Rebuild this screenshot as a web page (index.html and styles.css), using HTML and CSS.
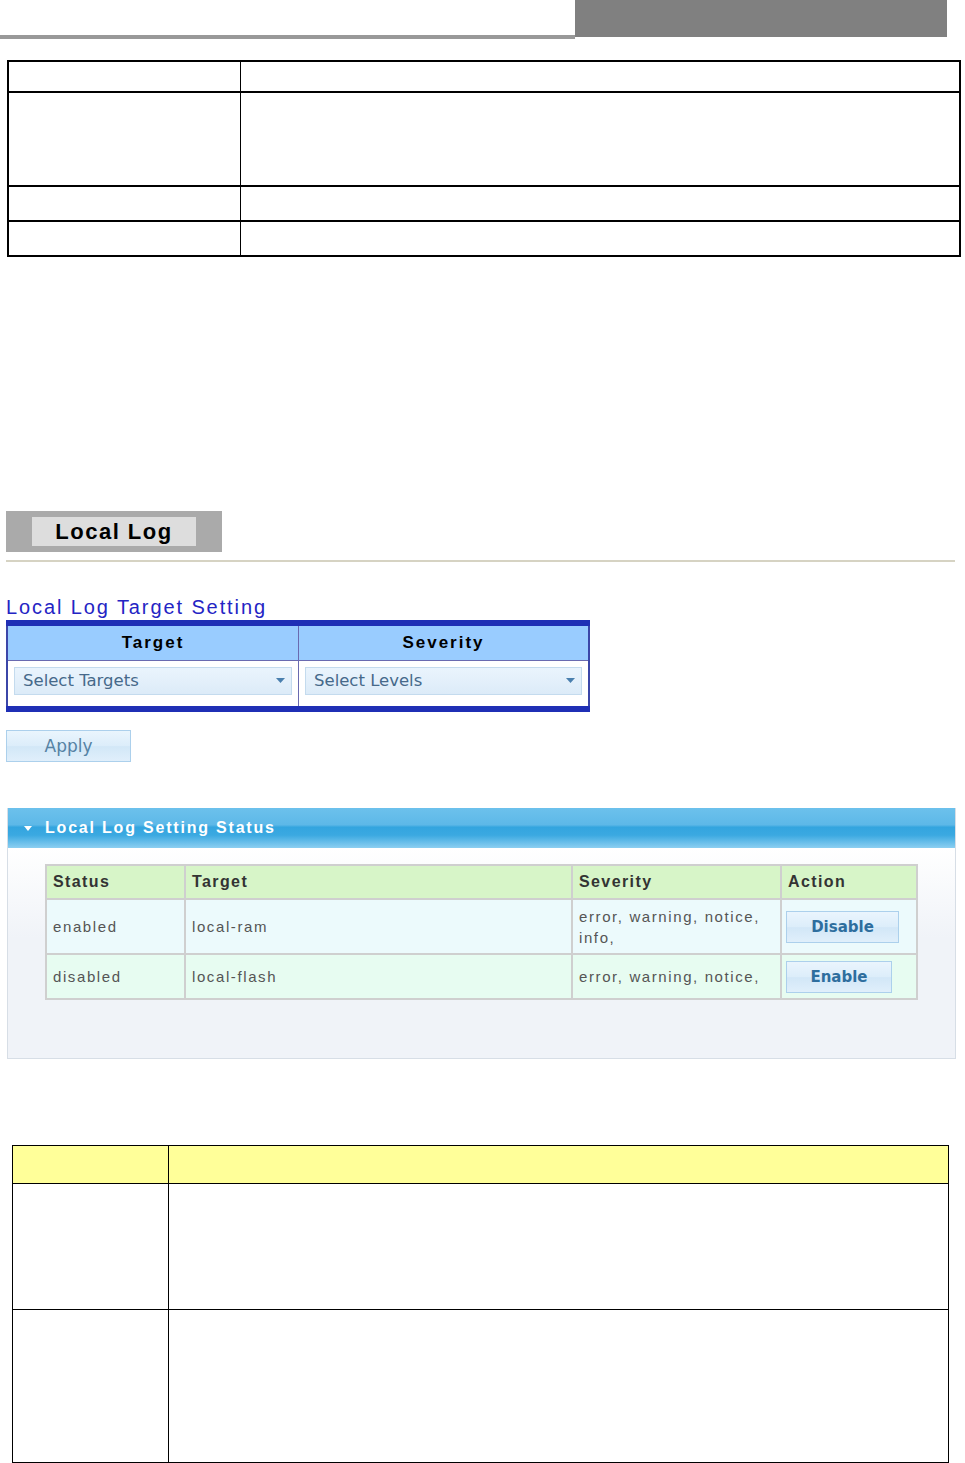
FILE: index.html
```html
<!DOCTYPE html>
<html lang="en">
<head>
    <meta charset="UTF-8" />
    <meta name="viewport" content="width=device-width, initial-scale=1.0"/>
    <title>Local Log</title>
    <link rel="stylesheet" href="styles.css">
</head>
<body>
    <div class="page-head">
        <div class="head-left"></div>
        <div class="head-right"></div>
    </div>

    <table class="spec-table">
        <tr class="row-a"><td class="col-name"></td><td></td></tr>
        <tr class="row-b"><td class="col-name"></td><td></td></tr>
        <tr class="row-c"><td class="col-name"></td><td></td></tr>
        <tr class="row-c"><td class="col-name"></td><td></td></tr>
    </table>

    <div class="tab-wrap">
        <div class="tab-label">Local Log</div>
    </div>
    <div class="rule"></div>

    <div class="section-title">Local Log Target Setting</div>
    <table class="target-table">
        <tr class="target-head">
            <th class="target-col">Target</th>
            <th>Severity</th>
        </tr>
        <tr class="target-body">
            <td>
                <div class="select">
                    <span>Select Targets</span>
                    <svg width="9" height="5" viewBox="0 0 9 5"><path d="M0 0h9L4.5 5z" fill="#4a7fae"/></svg>
                </div>
            </td>
            <td>
                <div class="select">
                    <span>Select Levels</span>
                    <svg width="9" height="5" viewBox="0 0 9 5"><path d="M0 0h9L4.5 5z" fill="#4a7fae"/></svg>
                </div>
            </td>
        </tr>
    </table>

    <button class="btn btn-apply">Apply</button>

    <div class="panel">
        <div class="panel-head">
            <svg class="panel-arrow" width="8" height="5" viewBox="0 0 8 5"><path d="M0 0h8L4 5z" fill="#ffffff"/></svg>
            <span>Local Log Setting Status</span>
        </div>
        <div class="panel-body">
            <table class="status-table">
                <tr class="status-head">
                    <th class="c-status">Status</th>
                    <th class="c-target">Target</th>
                    <th class="c-severity">Severity</th>
                    <th class="c-action">Action</th>
                </tr>
                <tr class="row-odd">
                    <td>enabled</td>
                    <td>local-ram</td>
                    <td>error, warning, notice, info,</td>
                    <td><button class="btn btn-disable">Disable</button></td>
                </tr>
                <tr class="row-even">
                    <td>disabled</td>
                    <td>local-flash</td>
                    <td>error, warning, notice,</td>
                    <td><button class="btn btn-enable">Enable</button></td>
                </tr>
            </table>
        </div>
    </div>

    <table class="desc-table">
        <tr class="desc-head"><td class="desc-name"></td><td></td></tr>
        <tr class="desc-row1"><td class="desc-name"></td><td></td></tr>
        <tr class="desc-row2"><td class="desc-name"></td><td></td></tr>
    </table>
</body>
</html>
```

FILE: styles.css
```css
body {
    margin: 0;
    padding: 0;
    background-color: #ffffff;
    font-family: "Liberation Sans", Arial, sans-serif;
    color: #000;
}

/* top header strip */
.page-head {
    display: flex;
    align-items: flex-start;
    height: 39px;
}

.head-left {
    width: 575px;
    height: 35px;
    border-bottom: 4px solid #999999;
}

.head-right {
    width: 372px;
    height: 37px;
    background-color: #808080;
}

/* empty spec table at the top */
.spec-table {
    margin: 21px 0 0 7px;
    width: 954px;
    border-collapse: collapse;
    border: 2px solid #000;
}

.spec-table td {
    border-top: 2px solid #000;
    border-bottom: 2px solid #000;
    border-left: 1px solid #000;
    border-right: 1px solid #000;
    padding: 0;
}

.spec-table .col-name {
    width: 231px;
}

.spec-table .row-a { height: 31px; }
.spec-table .row-b { height: 94px; }
.spec-table .row-c { height: 35px; }

/* Local Log tab */
.tab-wrap {
    display: inline-block;
    margin: 254px 0 0 6px;
    padding: 6px 26px;
    background-color: #aaaaaa;
}

.tab-label {
    width: 164px;
    height: 29px;
    line-height: 30px;
    background-color: #dddddd;
    text-align: center;
    font-size: 22px;
    font-weight: bold;
    letter-spacing: 1.5px;
    color: #000;
}

.rule {
    margin: 8px 10px 0 6px;
    height: 2px;
    background-color: #d6d3c3;
}

.section-title {
    margin: 33px 0 0 6px;
    height: 25px;
    line-height: 25px;
    font-size: 20px;
    letter-spacing: 1.9px;
    color: #2424c4;
}

/* target setting table */
.target-table {
    margin-left: 6px;
    width: 584px;
    border-collapse: collapse;
    border-top: 6px solid #1f2fb5;
    border-bottom: 6px solid #1f2fb5;
    border-left: 2px solid #3b46a8;
    border-right: 2px solid #3b46a8;
}

.target-head {
    height: 37px;
    background-color: #99ccff;
}

.target-head th {
    padding: 0;
    font-size: 17px;
    font-weight: bold;
    letter-spacing: 2px;
    color: #000;
    border-bottom: 1px solid #6a6ab0;
}

.target-col {
    width: 290px;
    border-right: 1px solid #6a6ab0;
}

.target-body {
    height: 49px;
}

.target-body td {
    padding: 0 6px;
    vertical-align: top;
}

.target-body td:first-child {
    border-right: 1px solid #6a6ab0;
}

.select {
    display: flex;
    align-items: center;
    justify-content: space-between;
    margin-top: 6px;
    height: 26px;
    padding: 0 6px 0 8px;
    border: 1px solid #c4dbee;
    background: linear-gradient(#eaf4fd, #dcebf8);
    font-family: "DejaVu Sans", Verdana, sans-serif;
    font-size: 16.5px;
    color: #46698a;
}

/* buttons */
.btn {
    height: 32px;
    padding: 0 24px;
    border: 1px solid #acd0ec;
    background: linear-gradient(#eaf5fd 0%, #dcedfa 50%, #d2e7f7 52%, #e0effb 100%);
    font-family: "DejaVu Sans", Verdana, sans-serif;
    font-size: 17px;
    color: #5582a4;
    cursor: pointer;
}

.btn-apply {
    display: block;
    width: 125px;
    margin: 18px 0 0 6px;
    padding: 0;
}

.btn-disable,
.btn-enable {
    color: #2e6e9e;
    font-size: 15px;
    font-weight: bold;
}

.btn-disable {
    width: 113px;
    padding: 0;
}

.btn-enable {
    width: 106px;
    padding: 0;
}

/* status panel */
.panel {
    margin: 46px 0 0 7px;
    width: 947px;
    border: 1px solid #d7dee6;
    border-top: none;
}

.panel-head {
    display: flex;
    align-items: center;
    height: 40px;
    padding-left: 16px;
    background: linear-gradient(#6cc1ec 0%, #5db8e8 42%, #33a5df 48%, #3ba9e1 68%, #8ccff1 100%);
    color: #ffffff;
    font-size: 16px;
    font-weight: bold;
    letter-spacing: 1.8px;
}

.panel-arrow {
    margin-right: 13px;
}

.panel-body {
    padding: 16px 0 58px 37px;
    background: linear-gradient(#ffffff 0, #f0f3f8 90px);
}

.status-table {
    width: 873px;
    border-collapse: collapse;
    border: 2px solid #cbcbcb;
}

.status-table th,
.status-table td {
    border: 2px solid #cfcfcf;
    padding: 0 6px;
    text-align: left;
    vertical-align: middle;
}

.status-head {
    height: 34px;
    background-color: #d7f5c8;
}

.status-head th {
    font-size: 16px;
    font-weight: bold;
    letter-spacing: 1.4px;
    color: #333333;
}

.c-status { width: 125px; }
.c-target { width: 373px; }
.c-severity { width: 195px; }

.status-table td {
    font-size: 15px;
    letter-spacing: 1.6px;
    line-height: 21px;
    color: #555555;
}

.status-table td:last-child {
    padding-left: 4px;
}

.row-odd {
    height: 55px;
    background-color: #ecfafc;
}

.row-even {
    height: 45px;
    background-color: #e7fcf1;
}

/* empty description table */
.desc-table {
    margin: 86px 0 0 12px;
    width: 937px;
    border-collapse: collapse;
    border: 1px solid #000;
}

.desc-table td {
    border: 1px solid #000;
    padding: 0;
}

.desc-name {
    width: 155px;
}

.desc-head {
    height: 38px;
    background-color: #ffff99;
}

.desc-row1 { height: 126px; }
.desc-row2 { height: 153px; }
```
